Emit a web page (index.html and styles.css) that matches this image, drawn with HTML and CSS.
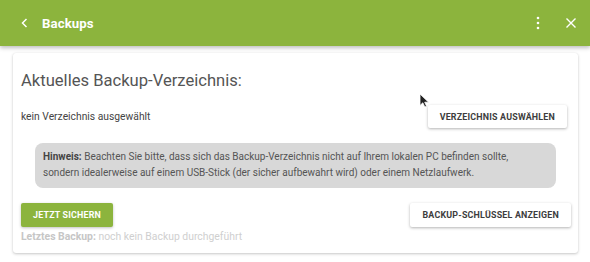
FILE: index.html
```html
<!DOCTYPE html>
<html lang="de">
<head>
<meta charset="utf-8">
<title>Backups</title>
<link rel="stylesheet" href="styles.css">
</head>
<body>
<header class="appbar">
  <button class="icon-btn back" aria-label="Zurück">
    <svg width="10" height="12" viewBox="0 0 10 12"><path d="M6.5 2 L2.5 6 L6.5 10" fill="none" stroke="#fff" stroke-width="1.5"/></svg>
  </button>
  <h1 class="appbar-title">Backups</h1>
  <div class="appbar-actions">
    <button class="icon-btn" aria-label="Menü">
      <svg width="4" height="14" viewBox="0 0 4 14"><circle cx="2" cy="2" r="1.3" fill="#fff"/><circle cx="2" cy="7" r="1.3" fill="#fff"/><circle cx="2" cy="12" r="1.3" fill="#fff"/></svg>
    </button>
    <button class="icon-btn" aria-label="Schließen">
      <svg width="12" height="12" viewBox="0 0 12 12"><path d="M1.5 1.5 L10.5 10.5 M10.5 1.5 L1.5 10.5" fill="none" stroke="#fff" stroke-width="1.4"/></svg>
    </button>
  </div>
</header>
<main class="content">
  <section class="card">
    <h2 class="card-title">Aktuelles Backup-Verzeichnis:</h2>
    <div class="row">
      <span class="dir-text">kein Verzeichnis ausgewählt</span>
      <button class="btn btn-raised">Verzeichnis auswählen</button>
    </div>
    <p class="hint"><strong>Hinweis:</strong> Beachten Sie bitte, dass sich das Backup-Verzeichnis nicht auf Ihrem lokalen PC befinden sollte, sondern idealerweise auf einem USB-Stick (der sicher aufbewahrt wird) oder einem Netzlaufwerk.</p>
    <div class="row row-actions">
      <button class="btn btn-primary">Jetzt sichern</button>
      <button class="btn btn-raised">Backup-Schlüssel anzeigen</button>
    </div>
    <p class="last-backup"><strong>Letztes Backup:</strong> noch kein Backup durchgeführt</p>
  </section>
</main>
<svg class="cursor" width="11" height="15" viewBox="0 0 11 15"><path d="M1 1 L1 12.5 L3.8 9.8 L5.8 14 L7.6 13.2 L5.7 9.2 L9.6 9.2 Z" fill="#222" stroke="#fff" stroke-width="0.8"/></svg>
</body>
</html>
```
FILE: styles.css
```css
* { box-sizing: border-box; }
html, body { margin: 0; padding: 0; }
body {
  width: 590px;
  height: 262px;
  overflow: hidden;
  background: #fff;
  font-family: Roboto, "Liberation Sans", Arial, sans-serif;
  color: #555;
  position: relative;
}
.appbar {
  height: 46px;
  background: #8cb43d;
  display: flex;
  align-items: center;
  padding: 0 12px 0 17px;
  box-shadow: 0 2px 4px rgba(0,0,0,0.25);
  position: relative;
  z-index: 1;
}
.icon-btn {
  background: none;
  border: 0;
  padding: 0;
  display: flex;
  align-items: center;
  justify-content: center;
  cursor: pointer;
}
.back { width: 16px; height: 20px; }
.appbar-title {
  margin: 0 0 0 9px;
  font-size: 13.2px;
  font-weight: 700;
  color: #fff;
  letter-spacing: 0.1px;
}
.appbar-actions {
  margin-left: auto;
  display: flex;
  align-items: center;
  gap: 19px;
}
.appbar-actions .icon-btn { width: 14px; height: 20px; }
.content {
  padding: 7px 12px 9px 13px;
}
.card {
  background: #fff;
  border-radius: 3px;
  box-shadow: 0 1px 3px rgba(0,0,0,0.22), 0 0 1px rgba(0,0,0,0.08);
  padding: 18px 8px 8px 8px;
}
.card-title {
  margin: 0;
  font-size: 16.6px;
  line-height: 20px;
  font-weight: 400;
  color: #555;
}
.row {
  display: flex;
  align-items: center;
  justify-content: space-between;
  margin-top: 14px;
}
.dir-text {
  font-size: 10.3px;
  color: #444;
}
.btn {
  border: 0;
  border-radius: 2px;
  font-family: inherit;
  font-size: 8.9px;
  font-weight: 700;
  letter-spacing: 0.2px;
  text-transform: uppercase;
  padding: 0 12px;
  height: 23px;
  cursor: pointer;
}
.btn-raised {
  background: #fff;
  color: #3d3d3d;
  box-shadow: 0 1px 3px rgba(0,0,0,0.3);
  margin-right: 3px;
}
.btn-primary {
  background: #8cb43d;
  color: #fff;
  box-shadow: 0 1px 3px rgba(0,0,0,0.25);
  height: 24px;
}
.row-actions { margin-top: 15px; }
.row-actions .btn { height: 24px; }
.row-actions .btn-raised { margin-right: -1px; }
.hint {
  margin: 15px 14px 0 14px;
  background: #d8d8d8;
  border-radius: 8px;
  padding: 6px 20px 7px 8px;
  font-size: 10px;
  line-height: 16px;
  color: #555;
}
.hint strong { color: #444; font-weight: 700; }
.last-backup {
  margin: 2px 0 0 0;
  font-size: 10.4px;
  line-height: 16px;
  color: #cfcfcf;
}
.last-backup strong { color: #c6c6c6; }
.cursor {
  position: absolute;
  left: 419px;
  top: 93px;
  z-index: 2;
}
```
